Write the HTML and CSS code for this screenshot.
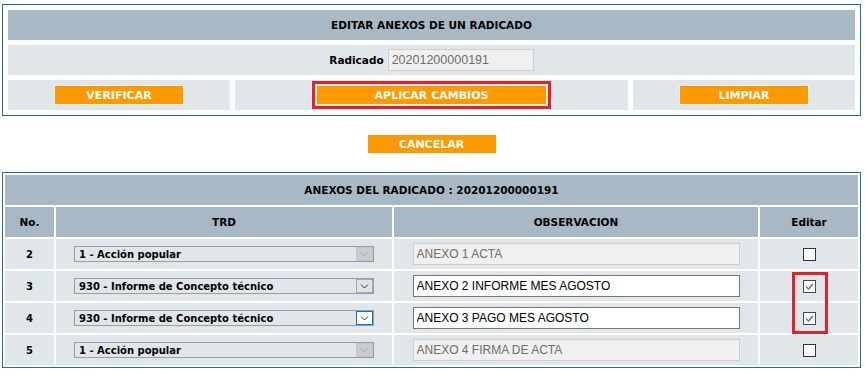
FILE: index.html
```html
<!DOCTYPE html>
<html lang="es">
  <head>
    <meta charset="UTF-8" />
    <meta name="viewport" content="width=device-width, initial-scale=1.0" />
    <title>Editar anexos</title>
    <link rel="stylesheet" href="styles.css">
  </head>

  <body>
    <div class="page">
      <section class="panel panel-top">
        <div class="bar">EDITAR ANEXOS DE UN RADICADO</div>
        <div class="cell wide">
          <label class="rad-label">Radicado</label>
          <input class="campo campo-rad" type="text" value="20201200000191" disabled>
        </div>
        <div class="cell"><button class="btn">VERIFICAR</button></div>
        <div class="cell"><button class="btn btn-ancho marcado">APLICAR CAMBIOS</button></div>
        <div class="cell"><button class="btn">LIMPIAR</button></div>
      </section>

      <div class="acciones">
        <button class="btn btn-plano">CANCELAR</button>
      </div>

      <section class="panel panel-lista">
        <div class="bar">ANEXOS DEL RADICADO : 20201200000191</div>
        <div class="bar">No.</div>
        <div class="bar">TRD</div>
        <div class="bar">OBSERVACION</div>
        <div class="bar">Editar</div>

        <!-- fila 2 -->
        <div class="cell num">2</div>
        <div class="cell">
          <div class="lista inactiva"><span>1 - Acción popular</span><i class="flecha"><svg width="9" height="5" viewBox="0 0 9 5"><path d="M1 0.5 L4.5 4 L8 0.5" fill="none" stroke="currentColor" stroke-width="1"/></svg></i></div>
        </div>
        <div class="cell"><input class="campo" type="text" value="ANEXO 1 ACTA" disabled></div>
        <div class="cell"><span class="chk"></span></div>

        <!-- fila 3 -->
        <div class="cell num">3</div>
        <div class="cell">
          <div class="lista"><span>930 - Informe de Concepto técnico</span><i class="flecha"><svg width="9" height="5" viewBox="0 0 9 5"><path d="M1 0.5 L4.5 4 L8 0.5" fill="none" stroke="currentColor" stroke-width="1"/></svg></i></div>
        </div>
        <div class="cell"><input class="campo activo" type="text" value="ANEXO 2 INFORME MES AGOSTO"></div>
        <div class="cell"><span class="chk marcada"><svg width="11" height="11" viewBox="0 0 11 11"><path d="M2 5.5 L4.5 8 L9 3" fill="none" stroke="currentColor" stroke-width="1.3"/></svg></span></div>

        <!-- fila 4 -->
        <div class="cell num">4</div>
        <div class="cell">
          <div class="lista"><span>930 - Informe de Concepto técnico</span><i class="flecha foco"><svg width="9" height="5" viewBox="0 0 9 5"><path d="M1 0.5 L4.5 4 L8 0.5" fill="none" stroke="currentColor" stroke-width="1"/></svg></i></div>
        </div>
        <div class="cell"><input class="campo activo" type="text" value="ANEXO 3 PAGO MES AGOSTO"></div>
        <div class="cell"><span class="chk marcada"><svg width="11" height="11" viewBox="0 0 11 11"><path d="M2 5.5 L4.5 8 L9 3" fill="none" stroke="currentColor" stroke-width="1.3"/></svg></span></div>

        <!-- fila 5 -->
        <div class="cell num">5</div>
        <div class="cell">
          <div class="lista inactiva"><span>1 - Acción popular</span><i class="flecha"><svg width="9" height="5" viewBox="0 0 9 5"><path d="M1 0.5 L4.5 4 L8 0.5" fill="none" stroke="currentColor" stroke-width="1"/></svg></i></div>
        </div>
        <div class="cell"><input class="campo" type="text" value="ANEXO 4 FIRMA DE ACTA" disabled></div>
        <div class="cell"><span class="chk"></span></div>

        <div class="resaltado"></div>
      </section>
    </div>
  </body>
</html>
```

FILE: styles.css
```css
body {
  margin: 0;
  background-color: #ffffff;
  font-family: "DejaVu Sans", Verdana, sans-serif;
  color: #000000;
}
.page {
  padding: 4px 0 0 2px;
  width: 859px;
}
.panel {
  box-sizing: border-box;
  width: 859px;
  border: 1px solid #2d6e7c;
  display: grid;
  grid-auto-rows: 30px;
  position: relative;
}
.panel-top {
  grid-template-columns: 222px 393px 222px;
  gap: 5px;
  padding: 5px;
}
.panel-lista {
  grid-template-columns: 49px 336px 364px 98px;
  gap: 2px;
  padding: 2px;
}
.bar {
  background-color: #a8b8c4;
  display: flex;
  align-items: center;
  justify-content: center;
  font-size: 10.5px;
  font-weight: bold;
}
.panel > .bar:first-child {
  grid-column: 1 / -1;
}
.cell {
  background-color: #e1e6ea;
  display: flex;
  align-items: center;
  justify-content: center;
}
.wide {
  grid-column: 1 / -1;
  gap: 4px;
}
.rad-label {
  font-size: 10.5px;
  font-weight: bold;
}
.num {
  font-size: 10px;
  font-weight: bold;
}

/* botones */
.btn {
  box-sizing: border-box;
  width: 130px;
  height: 20px;
  padding: 0;
  background-color: #ff9900;
  border: 1px solid #fff4e0;
  color: #ffffff;
  font-family: "DejaVu Sans", Verdana, sans-serif;
  font-size: 11px;
  font-weight: bold;
}
.btn-ancho {
  width: 231px;
}
.btn-plano {
  width: 128px;
  height: 18px;
  border: none;
}
.marcado {
  outline: 3px solid #e4222b;
  outline-offset: 1px;
}
.acciones {
  display: flex;
  justify-content: center;
  padding: 19px 0;
}

/* campos */
.campo {
  box-sizing: border-box;
  width: 327px;
  height: 22px;
  margin: 0;
  padding: 0 3px;
  border: 1px solid #cfcfcf;
  background-color: #f0f0f0;
  color: #6d6d6d;
  font-family: "Liberation Sans", Arial, sans-serif;
  font-size: 12px;
}
.campo-rad {
  width: 146px;
  font-size: 12.5px;
}
.campo.activo {
  background-color: #ffffff;
  border-color: #767676;
  color: #000000;
}

.lista {
  box-sizing: border-box;
  width: 300px;
  height: 16px;
  border: 1px solid #9c9c9c;
  display: flex;
  align-items: center;
  padding-left: 4px;
  font-size: 10px;
  font-weight: bold;
}
.lista span {
  flex: 1;
}
.flecha {
  box-sizing: border-box;
  width: 17px;
  height: 14px;
  border: 1px solid #ababab;
  background-color: #e3e3e3;
  color: #333333;
  display: flex;
  align-items: center;
  justify-content: center;
}
.inactiva .flecha {
  background-color: #cccccc;
  border-color: #c4c4c4;
  color: #a5a5a5;
}
.flecha.foco {
  background-color: #ffffff;
  border-color: #0078d7;
}

/* casillas */
.chk {
  box-sizing: border-box;
  width: 13px;
  height: 13px;
  border: 1px solid #333333;
  background-color: #ffffff;
  display: flex;
  align-items: center;
  justify-content: center;
}
.chk.marcada {
  border-color: #4a4a4a;
  color: #6a6a6a;
}
.resaltado {
  position: absolute;
  grid-column: 4;
  grid-row: 4 / 6;
  left: 32px;
  top: 1px;
  width: 36px;
  height: 62px;
  box-sizing: border-box;
  border: 3px solid #e4222b;
}
```
